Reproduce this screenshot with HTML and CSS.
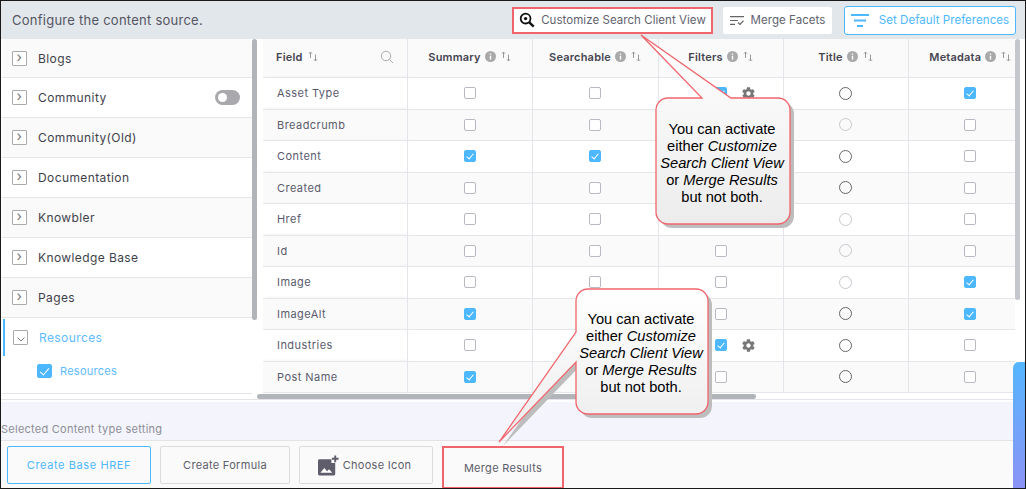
FILE: index.html
```html
<!DOCTYPE html>
<html lang="en">
<head>
  <meta charset="UTF-8" />
  <title>Configure the content source</title>
  <link rel="stylesheet" href="styles.css">
</head>
<body>

<svg class="icon-defs" width="0" height="0">
  <symbol id="sort" viewBox="0 0 10 11">
    <path d="M2.5 7V1M1 2.6 2.5 1 4 2.6" fill="none" stroke="currentColor" stroke-width="1"/>
    <path d="M7.5 3.5v6.5M6 8.4 7.5 10 9 8.4" fill="none" stroke="currentColor" stroke-width="1"/>
  </symbol>
  <symbol id="info" viewBox="0 0 11 11">
    <circle cx="5.5" cy="5.5" r="5.5" fill="#a9a9a9"/>
    <path d="M4.8 4.7h1.4v3.9H4.8zM4.8 2.4h1.4v1.4H4.8z" fill="#fff"/>
  </symbol>
  <symbol id="gear" viewBox="0 0 24 24">
    <path fill="#777" d="M19.4 13c.1-.3.1-.7.1-1s0-.7-.1-1l2.1-1.6c.2-.2.2-.4.1-.6l-2-3.5c-.1-.2-.4-.3-.6-.2l-2.5 1c-.5-.4-1.1-.7-1.7-1l-.4-2.7c0-.2-.2-.4-.5-.4h-4c-.2 0-.4.2-.5.4l-.4 2.7c-.6.3-1.2.6-1.7 1l-2.5-1c-.2-.1-.5 0-.6.2l-2 3.5c-.1.2-.1.5.1.6L4.5 11c0 .3-.1.7-.1 1s0 .7.1 1l-2.1 1.6c-.2.2-.2.4-.1.6l2 3.5c.1.2.4.3.6.2l2.5-1c.5.4 1.1.7 1.7 1l.4 2.7c0 .2.2.4.5.4h4c.2 0 .5-.2.5-.4l.4-2.7c.6-.3 1.2-.6 1.7-1l2.5 1c.2.1.5 0 .6-.2l2-3.5c.1-.2.1-.5-.1-.6L19.4 13zM12 15.500c-1.900 0-3.500-1.600-3.500-3.500s1.600-3.500 3.500-3.500 3.500 1.600 3.500 3.500-1.600 3.500-3.500 3.500z"/>
  </symbol>
</svg>

<div class="app">

  <header class="topbar">
    <p class="topbar-title">Configure the content source.</p>
    <div class="topbar-actions">
      <button class="btn btn-marked">
        <svg width="16" height="16" viewBox="0 0 17 17">
          <circle cx="7" cy="7" r="5.2" fill="none" stroke="#111" stroke-width="1.9"/>
          <circle cx="7" cy="7" r="1.8" fill="#111"/>
          <path d="M11 11l4.600 4.600" stroke="#111" stroke-width="2.600"/>
        </svg>
        Customize Search Client View
      </button>
      <button class="btn btn-plain">
        <svg width="14" height="9" viewBox="0 0 14 9">
          <path d="M0 .7h14M0 4.500h8M0 8.300h5" stroke="#666" stroke-width="1.200" fill="none"/>
          <path d="M8 6.500l2 2 3.500-3.800" stroke="#666" stroke-width="1.200" fill="none"/>
        </svg>
        Merge Facets
      </button>
      <button class="btn btn-blue">
        <svg width="18" height="13" viewBox="0 0 18 13">
          <path d="M0 1h18M3 6.500h12M6 12h6" stroke="#4db8ff" stroke-width="1.800" fill="none"/>
        </svg>
        Set Default Preferences
      </button>
    </div>
  </header>

  <div class="main">
    <div class="left-col">
      <nav class="sources">
        <div class="source"><span class="arrow">&#8250;</span>Blogs</div>
        <div class="source alt"><span class="arrow">&#8250;</span>Community<span class="toggle"></span></div>
        <div class="source"><span class="arrow">&#8250;</span>Community(Old)</div>
        <div class="source alt"><span class="arrow">&#8250;</span>Documentation</div>
        <div class="source"><span class="arrow">&#8250;</span>Knowbler</div>
        <div class="source alt"><span class="arrow">&#8250;</span>Knowledge Base</div>
        <div class="source"><span class="arrow">&#8250;</span>Pages</div>
        <div class="source source-open">
          <div class="source-head">
            <span class="arrow arrow-down">
              <svg width="8" height="5" viewBox="0 0 8 5"><path d="M.5.5 4 4 7.500.5" fill="none" stroke="#777"/></svg>
            </span>Resources
          </div>
          <div class="source-sub"><span class="box box-big checked"></span>Resources</div>
        </div>
      </nav>
      <div class="vtrack"><div class="vthumb"></div></div>
    </div>

    <div class="table-col">
      <div class="table-row-wrap">
        <div class="table-clip">
          <table class="fields">
            <thead>
              <tr>
                <th class="col-field">
                  <div class="field-head">
                    <span>Field <svg class="sort"><use href="#sort"/></svg></span>
                    <svg width="14" height="14" viewBox="0 0 14 14"><circle cx="6" cy="6" r="4.700" fill="none" stroke="#aaa"/><path d="M9.500 9.500 13 13" stroke="#aaa"/></svg>
                  </div>
                </th>
                <th>Summary <svg class="info"><use href="#info"/></svg> <svg class="sort"><use href="#sort"/></svg></th>
                <th>Searchable <svg class="info"><use href="#info"/></svg> <svg class="sort"><use href="#sort"/></svg></th>
                <th>Filters <svg class="info"><use href="#info"/></svg> <svg class="sort"><use href="#sort"/></svg></th>
                <th>Title <svg class="info"><use href="#info"/></svg> <svg class="sort"><use href="#sort"/></svg></th>
                <th>Metadata <svg class="info"><use href="#info"/></svg> <svg class="sort"><use href="#sort"/></svg></th>
              </tr>
            </thead>
            <tbody>
              <tr>
                <td class="col-field">Asset Type</td>
                <td><span class="box"></span></td>
                <td><span class="box"></span></td>
                <td><div class="filter-cell"><span class="box checked"></span><svg class="gear"><use href="#gear"/></svg></div></td>
                <td><span class="radio"></span></td>
                <td><span class="box checked"></span></td>
              </tr>
              <tr>
                <td class="col-field">Breadcrumb</td>
                <td><span class="box"></span></td>
                <td><span class="box"></span></td>
                <td><span class="box"></span></td>
                <td><span class="radio off"></span></td>
                <td><span class="box"></span></td>
              </tr>
              <tr>
                <td class="col-field">Content</td>
                <td><span class="box checked"></span></td>
                <td><span class="box checked"></span></td>
                <td><span class="box"></span></td>
                <td><span class="radio"></span></td>
                <td><span class="box"></span></td>
              </tr>
              <tr>
                <td class="col-field">Created</td>
                <td><span class="box"></span></td>
                <td><span class="box"></span></td>
                <td><span class="box"></span></td>
                <td><span class="radio"></span></td>
                <td><span class="box"></span></td>
              </tr>
              <tr>
                <td class="col-field">Href</td>
                <td><span class="box"></span></td>
                <td><span class="box"></span></td>
                <td><span class="box"></span></td>
                <td><span class="radio off"></span></td>
                <td><span class="box"></span></td>
              </tr>
              <tr>
                <td class="col-field">Id</td>
                <td><span class="box"></span></td>
                <td><span class="box"></span></td>
                <td><span class="box"></span></td>
                <td><span class="radio off"></span></td>
                <td><span class="box"></span></td>
              </tr>
              <tr>
                <td class="col-field">Image</td>
                <td><span class="box"></span></td>
                <td><span class="box"></span></td>
                <td><span class="box"></span></td>
                <td><span class="radio off"></span></td>
                <td><span class="box checked"></span></td>
              </tr>
              <tr>
                <td class="col-field">ImageAlt</td>
                <td><span class="box checked"></span></td>
                <td><span class="box"></span></td>
                <td><span class="box"></span></td>
                <td><span class="radio"></span></td>
                <td><span class="box checked"></span></td>
              </tr>
              <tr>
                <td class="col-field">Industries</td>
                <td><span class="box"></span></td>
                <td><span class="box"></span></td>
                <td><div class="filter-cell"><span class="box checked"></span><svg class="gear"><use href="#gear"/></svg></div></td>
                <td><span class="radio"></span></td>
                <td><span class="box"></span></td>
              </tr>
              <tr>
                <td class="col-field">Post Name</td>
                <td><span class="box checked"></span></td>
                <td><span class="box"></span></td>
                <td><span class="box"></span></td>
                <td><span class="radio"></span></td>
                <td><span class="box"></span></td>
              </tr>
            </tbody>
          </table>
        </div>
        <div class="vtrack-right"><div class="vthumb-right"></div></div>
      </div>
      <div class="htrack"><div class="hthumb"></div></div>
    </div>
  </div>

  <section class="settings-label">
    <span>Selected Content type setting</span>
  </section>

  <footer class="settings">
    <button class="tab tab-base">Create Base HREF</button>
    <button class="tab tab-formula">Create Formula</button>
    <button class="tab tab-icon">
      <svg width="22" height="21" viewBox="0 0 23 21">
        <path d="M1.500 4H14v4h4v11.500a1.500 1.500 0 0 1-1.500 1.500h-15A1.500 1.500 0 0 1 0 19.500V5.500A1.500 1.500 0 0 1 1.500 4z" fill="#5f5d6b"/>
        <path d="M2.500 18l4-5 3 3.500 2-2 3.500 3.500z" fill="#fff"/>
        <path d="M18 0v7M14.500 3.500h7" stroke="#5f5d6b" stroke-width="2"/>
      </svg>
      Choose Icon
    </button>
    <button class="tab tab-merge">Merge Results</button>
  </footer>

  <div class="side-tab"></div>

  <!-- callouts drawn over the page -->
  <svg class="callout-art" width="1026" height="489" viewBox="0 0 1026 489">
    <defs>
      <linearGradient id="fill" x1="0" y1="0" x2="0" y2="1">
        <stop offset="0" stop-color="#ffffff"/>
        <stop offset="1" stop-color="#ececec"/>
      </linearGradient>
    </defs>
    <path class="shadow" transform="translate(4 4)" d="M668 98H702L641 35 731 98H778a12 12 0 0 1 12 12V212a12 12 0 0 1-12 12H668a12 12 0 0 1-12-12V110a12 12 0 0 1 12-12z"/>
    <path class="bubble" d="M668 98H702L641 35 731 98H778a12 12 0 0 1 12 12V212a12 12 0 0 1-12 12H668a12 12 0 0 1-12-12V110a12 12 0 0 1 12-12z"/>
    <path class="shadow" transform="translate(4 4)" d="M588 289H696a12 12 0 0 1 12 12V402a12 12 0 0 1-12 12H588a12 12 0 0 1-12-12V362L499 442 576 332V301a12 12 0 0 1 12-12z"/>
    <path class="bubble" d="M588 289H696a12 12 0 0 1 12 12V402a12 12 0 0 1-12 12H588a12 12 0 0 1-12-12V362L499 442 576 332V301a12 12 0 0 1 12-12z"/>
  </svg>
  <div class="callout-text callout-one">You can activate<br>either <i>Customize<br>Search Client View</i><br>or <i>Merge Results</i><br>but not both.</div>
  <div class="callout-text callout-two">You can activate<br>either <i>Customize<br>Search Client View</i><br>or <i>Merge Results</i><br>but not both.</div>

</div>

</body>
</html>
```

FILE: styles.css
```css
* {
  box-sizing: border-box;
}

html, body {
  margin: 0;
  padding: 0;
}

body {
  width: 1026px;
  height: 489px;
  overflow: hidden;
  background: #fff;
  font-family: "Inter", "Open Sans", sans-serif;
  font-size: 11.5px;
  color: #4d4d5c;
}

.icon-defs {
  position: absolute;
}

.app {
  position: relative;
  width: 1026px;
  height: 489px;
  display: flex;
  flex-direction: column;
  border: 1px solid #1a1a1a;
  overflow: hidden;
}

/* top bar */
.topbar {
  height: 38px;
  flex: none;
  display: flex;
  align-items: center;
  justify-content: space-between;
  padding: 0 9px 0 11px;
  background: #e1e7eb;
}

.topbar-title {
  margin: 0;
  font-size: 13px;
  letter-spacing: 0.25px;
  color: #555562;
}

.topbar-actions {
  display: flex;
  align-items: center;
}

.btn {
  display: flex;
  align-items: center;
  justify-content: center;
  height: 27px;
  padding: 0;
  font: inherit;
  letter-spacing: 0.05px;
  background: #fff;
  border: 0;
  border-radius: 2px;
  color: #62626e;
}

.btn-marked {
  width: 201px;
  gap: 6px;
  border: 2px solid #f0656c;
  border-radius: 0;
}

.btn-plain {
  width: 109px;
  margin-left: 10px;
  gap: 7px;
}

.btn-blue {
  width: 172px;
  height: 29px;
  margin-left: 12px;
  gap: 10px;
  border: 1px solid #4db8ff;
  border-radius: 3px;
  color: #4db8ff;
}

/* main area */
.main {
  height: 361px;
  flex: none;
  display: flex;
  border-bottom: 1px solid #e4e4e8;
}

.left-col {
  width: 256px;
  flex: none;
  display: flex;
  overflow: hidden;
}

.sources {
  width: 251px;
  flex: none;
  padding-left: 1px;
}

.source {
  height: 40px;
  display: flex;
  align-items: center;
  font-size: 12px;
  letter-spacing: 0.4px;
  color: #3f3f4c;
  background: #fafafa;
  border-bottom: 1px solid #e4e6ea;
  padding-left: 10px;
}

.source:first-child {
  height: 39px;
}

.source.alt {
  background: #fff;
}

.arrow {
  width: 15px;
  height: 15px;
  flex: none;
  margin-right: 11px;
  display: flex;
  align-items: center;
  justify-content: center;
  font-size: 14px;
  line-height: 1;
  padding-bottom: 3px;
  color: #777;
  border: 1px solid #aaa;
  border-radius: 1px;
  background: #fff;
}

.arrow-down {
  padding: 3px 0 0;
}

.toggle {
  position: relative;
  width: 25px;
  height: 15px;
  margin-left: auto;
  margin-right: 12px;
  border-radius: 8px;
  background: #a9a9ad;
}

.toggle::before {
  content: "";
  position: absolute;
  left: 3px;
  top: 3px;
  width: 9px;
  height: 9px;
  border-radius: 50%;
  background: #fff;
}

.source-open {
  height: 75px;
  display: block;
  padding-left: 0;
  background: #fff;
  color: #5cbcff;
}

.source-head {
  height: 37px;
  margin-top: 1px;
  margin-left: 1px;
  display: flex;
  align-items: center;
  padding-left: 8px;
  border-left: 2px solid #4db8ff;
}

.source-sub {
  display: flex;
  align-items: center;
  gap: 8px;
  height: 26px;
  margin-top: 2px;
  padding-left: 35px;
  font-size: 11px;
  letter-spacing: 0.25px;
}

.vtrack {
  width: 5px;
  flex: none;
}

.vthumb {
  height: 281px;
  background: #b1b5ba;
  border-radius: 3px;
}

.table-col {
  width: 764px;
  flex: none;
}

.table-row-wrap {
  height: 355px;
  display: flex;
  padding-left: 6px;
}

.table-clip {
  width: 752px;
  height: 355px;
  overflow: hidden;
}

/* the last column runs on under the scrollbar */
.fields {
  width: 769px;
  table-layout: fixed;
  border-collapse: collapse;
}

.fields th, .fields td {
  padding: 0;
  text-align: center;
  border-right: 1px solid #e4e4ea;
  border-bottom: 1px solid #e4e6ea;
}

.fields th {
  height: 38.500px;
  padding-bottom: 2px;
  font-size: 11px;
  font-weight: 600;
  letter-spacing: 0.2px;
  color: #44444f;
  background: #fafafa;
  white-space: nowrap;
}

.fields td {
  height: 31.500px;
  background: #fff;
  line-height: 0;
}

.fields tbody tr:nth-child(even) td {
  background: #fafafa;
}

.fields th:nth-child(2), .fields td:nth-child(2) { width: 125px; }
.fields th:nth-child(3), .fields td:nth-child(3) { width: 126px; }
.fields th:nth-child(4), .fields td:nth-child(4) { width: 125px; }
.fields th:nth-child(5), .fields td:nth-child(5) { width: 125px; }

.fields th:last-child, .fields td:last-child {
  border-right: 0;
}

.fields .col-field {
  width: 144px;
  text-align: left;
  padding-left: 14px;
  box-shadow: 2px 0 3px rgba(0, 0, 0, 0.08);
}

.fields td.col-field {
  padding-top: 1px;
  font-size: 11px;
  letter-spacing: 0.45px;
  line-height: 1.2;
  color: #5a5a6c;
}

.field-head {
  display: flex;
  align-items: center;
  justify-content: space-between;
  margin-left: -1px;
  padding-right: 13px;
}

.sort {
  width: 10px;
  height: 11px;
  margin-left: 2px;
  color: #999;
  vertical-align: -1px;
}

.info {
  width: 11px;
  height: 11px;
  margin-left: 1px;
  vertical-align: -1px;
}

.box {
  display: inline-block;
  width: 12px;
  height: 12px;
  border: 1px solid #b9b9c4;
  border-radius: 2px;
  background: #fff;
  position: relative;
}

.box.checked {
  background: #4db8ff;
  border-color: #4db8ff;
}

.box.checked::after {
  content: "";
  position: absolute;
  left: 3px;
  top: 1px;
  width: 3px;
  height: 6px;
  border: solid #fff;
  border-width: 0 1px 1px 0;
  transform: rotate(40deg);
}

.box-big {
  width: 15px;
  height: 14px;
}

.box-big.checked::after {
  left: 4px;
  top: 1px;
  width: 4px;
  height: 8px;
}

.radio {
  display: inline-block;
  width: 13px;
  height: 13px;
  border: 1px solid #666;
  border-radius: 50%;
}

.radio.off {
  border-color: #c8c8d0;
}

.filter-cell {
  display: grid;
  grid-template-columns: 1fr auto 1fr;
  align-items: center;
}

.filter-cell .box {
  grid-column: 2;
}

.gear {
  grid-column: 3;
  justify-self: start;
  width: 15px;
  height: 15px;
  margin-left: 14px;
}

.vtrack-right {
  width: 5px;
  flex: none;
}

.vthumb-right {
  height: 261px;
  background: #c4c7cc;
  border-radius: 3px;
}

.htrack {
  height: 6px;
}

.hthumb {
  width: 499px;
  height: 5px;
  border-radius: 3px;
  background: #b1b5ba;
}

/* bottom settings */
.settings-label {
  height: 39px;
  margin-top: 2px;
  flex: none;
  display: flex;
  align-items: flex-end;
  padding-bottom: 4px;
  font-size: 11px;
  letter-spacing: 0.25px;
  color: #8d8d95;
  background: #f4f5fc;
  border-bottom: 1px solid #e4e4e8;
}

.settings {
  flex: 1;
  display: flex;
  padding: 5px 0 0 6px;
  gap: 9px;
  background: #fafafa;
}

.tab {
  height: 38px;
  display: flex;
  align-items: center;
  justify-content: center;
  gap: 3px;
  padding: 0;
  font: inherit;
  font-size: 11px;
  letter-spacing: 0.3px;
  color: #5d5d69;
  background: #fafafa;
  border: 1px solid #dcdcde;
  border-radius: 2px;
}

.tab-base {
  width: 144px;
  letter-spacing: 0.6px;
  color: #4db8ff;
  border-color: #4db8ff;
}

.tab-formula {
  width: 130px;
}

.tab-icon {
  width: 134px;
  padding-right: 3px;
}

.tab-merge {
  width: 122px;
  height: 43px;
  border: 2px solid #f0656c;
  border-radius: 0;
}

.side-tab {
  position: absolute;
  right: 0;
  top: 361px;
  width: 12px;
  height: 127px;
  border-top-left-radius: 6px;
  background: linear-gradient(180deg, #55b6ff, #8b93f5);
}

/* callouts */
.callout-art {
  position: absolute;
  left: -1px;
  top: -1px;
}

.shadow {
  fill: #bdbdbd;
}

.bubble {
  fill: url(#fill);
  stroke: #f0656c;
  stroke-width: 1.300;
}

.callout-text {
  position: absolute;
  font-family: "Liberation Sans", Arial, sans-serif;
  font-size: 14.670px;
  line-height: 17px;
  text-align: center;
  color: #000;
  white-space: nowrap;
}

.callout-one {
  left: 654px;
  top: 120px;
  width: 134px;
}

.callout-two {
  left: 574px;
  top: 310px;
  width: 132px;
}
```
